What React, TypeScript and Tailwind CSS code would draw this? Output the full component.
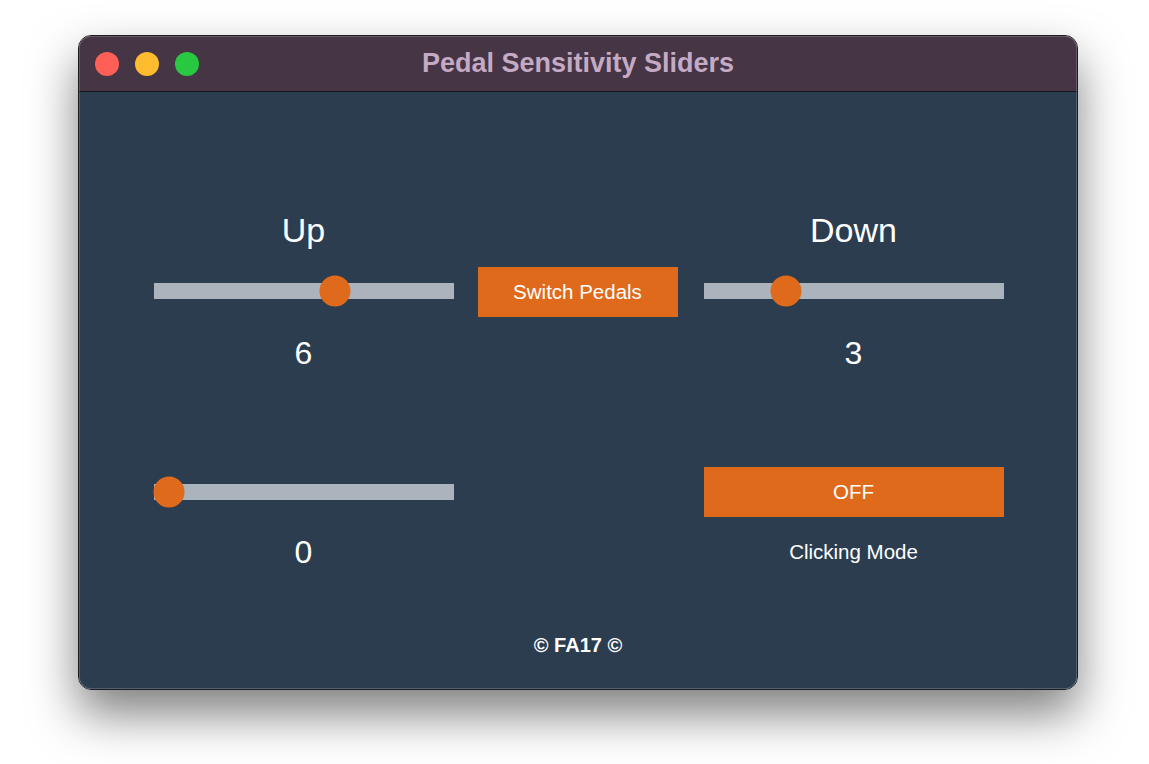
import React from "react";

const font = { fontFamily: '"Liberation Sans", Arial, sans-serif' };

function Slider({ pos }: { pos: number }) {
  return (
    <div className="relative h-[50px] w-[300px] flex items-center">
      <div className="h-[16px] w-full bg-[#abb3bc]" />
      <div
        className="absolute top-1/2 h-[31px] w-[31px] -translate-x-1/2 -translate-y-1/2 rounded-full bg-[#e06a1b]"
        style={{ left: pos }}
      />
    </div>
  );
}

export default function App() {
  return (
    <div className="min-h-[764px] w-[1149px] bg-white pl-[78px] pt-[35px]" style={font}>
      <div className="relative flex h-[655px] w-[1000px] flex-col overflow-hidden rounded-[13px] border border-[#1c1c1e] shadow-[0_24px_48px_rgba(0,0,0,0.5)]">
        <div className="relative flex h-[56px] items-center border-b border-[#15151a] bg-[#463545]">
          <div className="absolute left-[16px] flex gap-[16px]">
            <div className="h-[24px] w-[24px] rounded-full bg-[#fe5f57]" />
            <div className="h-[24px] w-[24px] rounded-full bg-[#febc2e]" />
            <div className="h-[24px] w-[24px] rounded-full bg-[#28c840]" />
          </div>
          <div className="w-full text-center text-[27px] font-bold text-[#c4aac4]">Pedal Sensitivity Sliders</div>
        </div>
        <div className="flex flex-1 flex-col items-center bg-[#2c3d50] pt-[118px] text-white">
          <div className="flex items-start pl-[1px]">
            <div className="flex w-[300px] flex-col items-center">
              <div className="h-[40px] text-[34px] leading-[40px]">Up</div>
              <div className="mt-[16px]"><Slider pos={181} /></div>
              <div className="mt-[19px] h-[36px] text-[32px] leading-[36px]">6</div>
            </div>
            <div className="ml-[24px] mt-[57px] flex h-[50px] w-[200px] items-center justify-center bg-[#e06a1b] text-[20.5px]">
              Switch Pedals
            </div>
            <div className="ml-[26px] flex w-[300px] flex-col items-center">
              <div className="h-[40px] text-[34px] leading-[40px]">Down</div>
              <div className="mt-[16px]"><Slider pos={82} /></div>
              <div className="mt-[19px] h-[36px] text-[32px] leading-[36px]">3</div>
            </div>
          </div>
          <div className="mt-[96px] flex items-start pl-[1px]">
            <div className="flex w-[300px] flex-col items-center">
              <Slider pos={15.5} />
              <div className="mt-[17px] h-[36px] text-[32px] leading-[36px]">0</div>
            </div>
            <div className="ml-[24px] w-[200px]" />
            <div className="ml-[26px] flex w-[300px] flex-col items-center">
              <div className="flex h-[50px] w-[300px] items-center justify-center bg-[#e06a1b] text-[20.5px]">OFF</div>
              <div className="mt-[17px] h-[36px] text-[20.5px] leading-[36px]">Clicking Mode</div>
            </div>
          </div>
          <div className="mt-[64px] text-[20px] font-bold leading-[22px]">© FA17 ©</div>
        </div>
        <div className="pointer-events-none absolute inset-0 rounded-[12px] shadow-[inset_0_0_0_1px_rgba(255,255,255,0.18)]" />
      </div>
    </div>
  );
}
